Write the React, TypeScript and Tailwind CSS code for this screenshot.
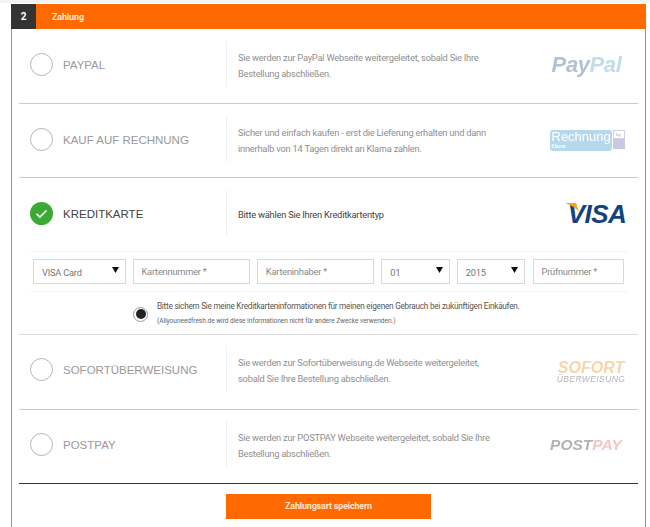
import { ReactNode } from "react";

const bodyFont = "font-['Roboto',sans-serif]";
const copyType = "text-[9.3px] tracking-[-0.23px]";

function Radio({ checked }: { checked?: boolean }) {
  if (checked) {
    return (
      <svg width="23" height="23" viewBox="0 0 23 23" className="shrink-0">
        <circle cx="11.5" cy="11.5" r="11.5" fill="#3aaa35" />
        <path d="M6.5 11.8l3.4 3.3 6.6-6.6" fill="none" stroke="#fff" strokeWidth="1.6" />
      </svg>
    );
  }
  return <div className="h-[23px] w-[23px] shrink-0 rounded-full border border-[#b5b5b5] bg-white" />;
}

function PaymentRow({
  label,
  lines,
  logo,
  size,
  checked,
}: {
  label: string;
  lines: string[];
  logo: ReactNode;
  size: string;
  checked?: boolean;
}) {
  return (
    <div className={`flex items-center pl-[11px] pr-[13px] ${size}`}>
      <Radio checked={checked} />
      <div
        className={`ml-[10px] mt-[4px] w-[163px] shrink-0 font-['Liberation_Sans',sans-serif] text-[11.5px] ${
          checked ? "text-[#444]" : "text-[#999]"
        }`}
      >
        {label}
      </div>
      <div className="flex h-[46px] flex-1 flex-col justify-center gap-[5px] border-l border-[#f0f0f0] pl-[11px] pt-[3px]">
        {lines.map((line) => (
          <div
            key={line}
            className={`${bodyFont} ${copyType} leading-[11px] ${checked ? "text-[#444]" : "text-[#8f8f8f]"}`}
          >
            {line}
          </div>
        ))}
      </div>
      <div className="flex w-[80px] shrink-0 items-center justify-center">{logo}</div>
    </div>
  );
}

function SelectBox({ value, className }: { value: string; className: string }) {
  return (
    <div
      className={`${className} flex h-[25px] items-center justify-between border border-[#d9d9d9] pl-[8px] pr-[5px] ${bodyFont} ${copyType} text-[#777]`}
    >
      <span className="mt-[2px]">{value}</span>
      <svg width="7" height="6" viewBox="0 0 7 6" className="mb-[3px] mr-[1px]">
        <path d="M0 0h7L3.5 6z" fill="#111" />
      </svg>
    </div>
  );
}

function InputBox({ placeholder, className }: { placeholder: string; className: string }) {
  return (
    <div
      className={`${className} flex h-[25px] items-center border border-[#d9d9d9] pl-[8px] ${bodyFont} ${copyType} text-[#888]`}
    >
      {placeholder}
    </div>
  );
}

const PayPalLogo = (
  <div className="ml-[3px] font-['Liberation_Sans',sans-serif] text-[22px] font-bold italic tracking-[-0.4px] blur-[0.3px]">
    <span className="text-[#b4c1d3]">Pay</span>
    <span className="text-[#c3dcea]">Pal</span>
  </div>
);

const RechnungLogo = (
  <div className="ml-[4px] mt-[3px] flex items-start gap-[1px] blur-[0.2px]">
    <div className="flex h-[21px] w-[62px] flex-col rounded-[3px] bg-[#b5d8ec] pl-[2px] font-['Liberation_Sans',sans-serif] text-white">
      <span className="text-[13px] leading-[14px]">Rechnung</span>
      <span className="text-[4.5px] font-bold leading-[5px]">Klarna</span>
    </div>
    <div className="flex w-[12px] flex-col">
      <div className="h-[9px] border border-[#d0d0e0] text-center text-[4px] leading-[7px] text-[#99a]">by</div>
      <div className="h-[10px] bg-[#c9c9e2]" />
    </div>
  </div>
);

const VisaLogo = (
  <div className="relative ml-[24px] mt-[2px] font-['Liberation_Sans',sans-serif] text-[26px] font-bold italic leading-none tracking-[-0.6px] text-[#12427f]">
    VISA
    <svg width="16" height="10" viewBox="0 0 16 10" className="absolute -left-[3px] top-[2px]">
      <path d="M0 0h11l3 9C11 5 6 2 0 0z" fill="#f4a51c" />
    </svg>
  </div>
);

const SofortLogo = (
  <div className="ml-[12px] mt-[5px] flex flex-col items-center font-['Liberation_Sans',sans-serif] font-bold italic blur-[0.2px]">
    <span className="text-[16px] leading-[15px] text-[#f8d5aa]">SOFORT</span>
    <span className="text-[8.5px] font-normal leading-[9px] tracking-[0.4px] text-[#b4b4b4]">ÜBERWEISUNG</span>
  </div>
);

const PostPayLogo = (
  <div className="ml-[2px] mt-[1px] font-['Liberation_Sans',sans-serif] text-[15.5px] font-bold italic blur-[0.2px]">
    <span className="text-[#b3b3b3]">POST</span>
    <span className="text-[#f3c6c8]">PAY</span>
  </div>
);

export default function App() {
  return (
    <div className="h-[527px] w-[650px] overflow-hidden bg-white">
      <div className="h-[3px] bg-[#f3f3f3]" />
      <div className="ml-[11px] mt-[1px] w-[635px]">
        <div className="flex h-[25px] items-stretch bg-[#ff6900]">
          <div className={`flex w-[25px] items-center justify-center bg-[#333] text-[10px] font-bold text-white ${bodyFont}`}>
            2
          </div>
          <div className={`ml-[16px] mt-[2px] flex items-center text-[9px] font-bold tracking-[-0.15px] text-[#ffe6d2] ${bodyFont}`}>
            Zahlung
          </div>
        </div>

        <div className="h-[498px] border-x border-[#dd7f3e] px-[7px]">
          <div className="border-b border-[#ccc]">
            <PaymentRow
              label="PAYPAL"
              size="h-[74px] pb-[4px]"
              lines={[
                "Sie werden zur PayPal Webseite weitergeleitet, sobald Sie Ihre",
                "Bestellung abschließen.",
              ]}
              logo={PayPalLogo}
            />
          </div>
          <div className="border-b border-[#ccc]">
            <PaymentRow
              label="KAUF AUF RECHNUNG"
              size="h-[73px] pb-[3px]"
              lines={[
                "Sicher und einfach kaufen - erst die Lieferung erhalten und dann",
                "innerhalb von 14 Tagen direkt an Klarna zahlen.",
              ]}
              logo={RechnungLogo}
            />
          </div>
          <div className="border-b border-[#ddd]">
            <PaymentRow
              label="KREDITKARTE"
              size="h-[73px] pb-[3px]"
              lines={["Bitte wählen Sie Ihren Kreditkartentyp"]}
              logo={VisaLogo}
              checked
            />
            <div className="mx-[11px] flex h-[41px] items-center gap-[7px] border-y border-[#f4f4f4] pl-[3px] pr-[3px]">
              <SelectBox value="VISA Card" className="w-[93px]" />
              <InputBox placeholder="Kartennummer *" className="w-[118px]" />
              <InputBox placeholder="Karteninhaber *" className="w-[118px]" />
              <SelectBox value="01" className="w-[69px]" />
              <SelectBox value="2015" className="w-[68px]" />
              <InputBox placeholder="Prüfnummer *" className="ml-[1px] w-[92px]" />
            </div>
            <div className="flex h-[42px] items-center pl-[114px]">
              <div className="mt-[2px] flex h-[15px] w-[15px] shrink-0 items-center justify-center rounded-full border border-[#999] bg-white">
                <div className="h-[10px] w-[10px] rounded-full bg-[#222]" />
              </div>
              <div className={`ml-[9px] ${bodyFont}`}>
                <div className="text-[8.2px] leading-[11px] tracking-[-0.24px] text-[#555]">
                  Bitte sichern Sie meine Kreditkarteninformationen für meinen eigenen Gebrauch bei zukünftigen Einkäufen.
                </div>
                <div className="mt-[5px] text-[6.6px] leading-[8px] tracking-[-0.05px] text-[#666]">
                  (Allyouneedfresh.de wird diese Informationen nicht für andere Zwecke verwenden.)
                </div>
              </div>
            </div>
          </div>
          <div className="border-b border-[#ccc]">
            <PaymentRow
              label="SOFORTÜBERWEISUNG"
              size="h-[74px] pb-[6px]"
              lines={[
                "Sie werden zur Sofortüberweisung.de Webseite weitergeleitet,",
                "sobald Sie Ihre Bestellung abschließen.",
              ]}
              logo={SofortLogo}
            />
          </div>
          <div className="border-b border-[#333]">
            <PaymentRow
              label="POSTPAY"
              size="h-[73px] pb-[5px]"
              lines={[
                "Sie werden zur POSTPAY Webseite weitergeleitet, sobald Sie Ihre",
                "Bestellung abschließen.",
              ]}
              logo={PostPayLogo}
            />
          </div>
          <div className="flex justify-center pt-[10px]">
            <div className={`flex h-[25px] w-[205px] items-center justify-center bg-[#ff6900] text-[9px] font-bold tracking-[-0.2px] text-[#ffe6d2] ${bodyFont}`}>
              Zahlungsart speichern
            </div>
          </div>
        </div>
      </div>
    </div>
  );
}
